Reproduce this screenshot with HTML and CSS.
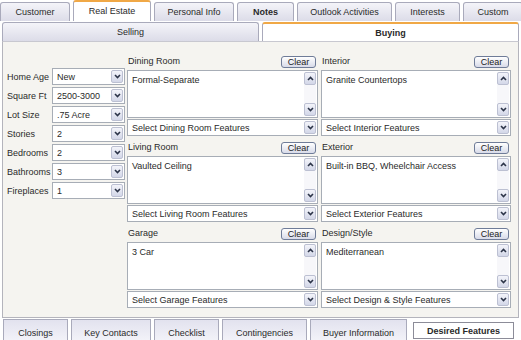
FILE: index.html
```html
<!DOCTYPE HTML>
<html>
<head>
<link rel="stylesheet" href="styles.css">
</head>
<body>
<div class="toptabs">
  <div class="tab w70">Customer</div>
  <div class="tab on w78">Real Estate</div>
  <div class="tab w80">Personal Info</div>
  <div class="tab bold w57">Notes</div>
  <div class="tab w95">Outlook Activities</div>
  <div class="tab w65">Interests</div>
  <div class="tab w60">Custom</div>
</div>

<div class="subtabs">
  <div class="subtab">Selling</div>
  <div class="subtab on bold">Buying</div>
</div>

<div class="panel">
  <div class="leftcol">
    <div class="row"><span class="lbl">Home Age</span><div class="sel small"><span>New</span><i class="arr"><svg width="7" height="5"><polyline points="1,1 3.5,3.5 6,1"/></svg></i></div></div>
    <div class="row"><span class="lbl">Square Ft</span><div class="sel small"><span>2500-3000</span><i class="arr"><svg width="7" height="5"><polyline points="1,1 3.5,3.5 6,1"/></svg></i></div></div>
    <div class="row"><span class="lbl">Lot Size</span><div class="sel small"><span>.75 Acre</span><i class="arr"><svg width="7" height="5"><polyline points="1,1 3.5,3.5 6,1"/></svg></i></div></div>
    <div class="row"><span class="lbl">Stories</span><div class="sel small"><span>2</span><i class="arr"><svg width="7" height="5"><polyline points="1,1 3.5,3.5 6,1"/></svg></i></div></div>
    <div class="row"><span class="lbl">Bedrooms</span><div class="sel small"><span>2</span><i class="arr"><svg width="7" height="5"><polyline points="1,1 3.5,3.5 6,1"/></svg></i></div></div>
    <div class="row"><span class="lbl">Bathrooms</span><div class="sel small"><span>3</span><i class="arr"><svg width="7" height="5"><polyline points="1,1 3.5,3.5 6,1"/></svg></i></div></div>
    <div class="row"><span class="lbl">Fireplaces</span><div class="sel small"><span>1</span><i class="arr"><svg width="7" height="5"><polyline points="1,1 3.5,3.5 6,1"/></svg></i></div></div>
  </div>

  <div class="col">
    <div class="group">
      <div class="ghead"><span>Dining Room</span><button class="clear">Clear</button></div>
      <div class="box"><span class="val">Formal-Separate</span>
        <div class="scroll"><i class="arr"><svg width="7" height="5"><polyline points="1,4 3.5,1.5 6,4"/></svg></i><i class="arr"><svg width="7" height="5"><polyline points="1,1 3.5,3.5 6,1"/></svg></i></div>
      </div>
      <div class="sel"><span>Select Dining Room Features</span><i class="arr"><svg width="7" height="5"><polyline points="1,1 3.5,3.5 6,1"/></svg></i></div>
    </div>
    <div class="group">
      <div class="ghead"><span>Living Room</span><button class="clear">Clear</button></div>
      <div class="box"><span class="val">Vaulted Ceiling</span>
        <div class="scroll"><i class="arr"><svg width="7" height="5"><polyline points="1,4 3.5,1.5 6,4"/></svg></i><i class="arr"><svg width="7" height="5"><polyline points="1,1 3.5,3.5 6,1"/></svg></i></div>
      </div>
      <div class="sel"><span>Select Living Room Features</span><i class="arr"><svg width="7" height="5"><polyline points="1,1 3.5,3.5 6,1"/></svg></i></div>
    </div>
    <div class="group">
      <div class="ghead"><span>Garage</span><button class="clear">Clear</button></div>
      <div class="box"><span class="val">3 Car</span>
        <div class="scroll"><i class="arr"><svg width="7" height="5"><polyline points="1,4 3.5,1.5 6,4"/></svg></i><i class="arr"><svg width="7" height="5"><polyline points="1,1 3.5,3.5 6,1"/></svg></i></div>
      </div>
      <div class="sel"><span>Select Garage Features</span><i class="arr"><svg width="7" height="5"><polyline points="1,1 3.5,3.5 6,1"/></svg></i></div>
    </div>
  </div>

  <div class="col right">
    <div class="group">
      <div class="ghead"><span>Interior</span><button class="clear">Clear</button></div>
      <div class="box"><span class="val">Granite Countertops</span>
        <div class="scroll"><i class="arr"><svg width="7" height="5"><polyline points="1,4 3.5,1.5 6,4"/></svg></i><i class="arr"><svg width="7" height="5"><polyline points="1,1 3.5,3.5 6,1"/></svg></i></div>
      </div>
      <div class="sel"><span>Select Interior Features</span><i class="arr"><svg width="7" height="5"><polyline points="1,1 3.5,3.5 6,1"/></svg></i></div>
    </div>
    <div class="group">
      <div class="ghead"><span>Exterior</span><button class="clear">Clear</button></div>
      <div class="box"><span class="val">Built-in BBQ, Wheelchair Access</span>
        <div class="scroll"><i class="arr"><svg width="7" height="5"><polyline points="1,4 3.5,1.5 6,4"/></svg></i><i class="arr"><svg width="7" height="5"><polyline points="1,1 3.5,3.5 6,1"/></svg></i></div>
      </div>
      <div class="sel"><span>Select Exterior Features</span><i class="arr"><svg width="7" height="5"><polyline points="1,1 3.5,3.5 6,1"/></svg></i></div>
    </div>
    <div class="group">
      <div class="ghead"><span>Design/Style</span><button class="clear">Clear</button></div>
      <div class="box"><span class="val">Mediterranean</span>
        <div class="scroll"><i class="arr"><svg width="7" height="5"><polyline points="1,4 3.5,1.5 6,4"/></svg></i><i class="arr"><svg width="7" height="5"><polyline points="1,1 3.5,3.5 6,1"/></svg></i></div>
      </div>
      <div class="sel"><span>Select Design &amp; Style Features</span><i class="arr"><svg width="7" height="5"><polyline points="1,1 3.5,3.5 6,1"/></svg></i></div>
    </div>
  </div>
</div>

<div class="bottomtabs">
  <div class="btab w65">Closings</div>
  <div class="btab w80">Key Contacts</div>
  <div class="btab w65">Checklist</div>
  <div class="btab w85">Contingencies</div>
  <div class="btab w97">Buyer Information</div>
  <div class="btab on bold w101">Desired Features</div>
</div>
</body>
</html>
```

FILE: styles.css
```css
body {
  margin: 0;
  background: #fff;
  font-family: "Liberation Sans", Arial, sans-serif;
  font-size: 9px;
  color: #2a2a2a;
  overflow: hidden;
}
.bold { font-weight: bold; }

.w57 { width: 57px; }
.w60 { width: 60px; }
.w65 { width: 65px; }
.w70 { width: 70px; }
.w78 { width: 78px; }
.w80 { width: 80px; }
.w85 { width: 85px; }
.w95 { width: 95px; }
.w97 { width: 97px; }
.w101 { width: 101px; }

/* top tabs */
.toptabs {
  display: flex;
  align-items: flex-end;
  gap: 3px;
  height: 21px;
}
.tab {
  height: 19px;
  box-sizing: border-box;
  border: 1px solid #a9aabb;
  border-bottom: none;
  border-radius: 3px 3px 0 0;
  background: linear-gradient(#f4f4f9, #dcdce8);
  display: flex;
  align-items: center;
  justify-content: center;
  padding-bottom: 1px;
  flex-shrink: 0;
}
.tab.on {
  height: 21px;
  background: #fff;
  border-top: 2px solid #f0a846;
}

/* sub tabs */
.subtabs {
  display: flex;
  gap: 3px;
  margin: 1px 2px 0 2px;
  height: 19px;
}
.subtab {
  flex: 1;
  box-sizing: border-box;
  border: 1px solid #a9aabb;
  border-bottom: none;
  border-radius: 3px 3px 0 0;
  background: linear-gradient(#f4f4f9, #dcdce8);
  display: flex;
  align-items: center;
  justify-content: center;
}
.subtab.on {
  background: #fff;
  border-top: 2px solid #f0a846;
}

/* main panel */
.panel {
  margin: 0 2px;
  height: 277px;
  box-sizing: border-box;
  border: 1px solid #b4b4bc;
  border-top-color: #c8c8d0;
  background: #f5f4f0;
  display: flex;
  padding: 14px 0 0 4px;
}
.leftcol {
  width: 120px;
  padding-top: 12px;
  display: flex;
  flex-direction: column;
  gap: 2px;
}
.row {
  display: flex;
  align-items: center;
  height: 17px;
}
.lbl { width: 45px; }

.sel {
  height: 17px;
  box-sizing: border-box;
  border: 1px solid #a7adb6;
  background: #fff;
  display: flex;
  align-items: center;
  justify-content: space-between;
  padding-left: 4px;
}
.sel.small { width: 73px; }
.arr {
  width: 12px;
  height: 13px;
  box-sizing: border-box;
  margin-right: 1px;
  border: 1px solid #bcc0d2;
  border-radius: 2px;
  background: linear-gradient(#f3f4fa, #d3d7e8);
  display: flex;
  align-items: center;
  justify-content: center;
}
.arr svg polyline {
  fill: none;
  stroke: #2c3448;
  stroke-width: 1.6;
}

.col {
  width: 191px;
  display: flex;
  flex-direction: column;
  gap: 6px;
}
.col.right {
  width: 190px;
  margin-left: 3px;
}
.group {
  display: flex;
  flex-direction: column;
}
.ghead {
  height: 14px;
  display: flex;
  align-items: flex-start;
  justify-content: space-between;
  padding-left: 1px;
}
.clear {
  width: 35px;
  height: 12px;
  margin-right: 2px;
  padding: 0;
  font-family: inherit;
  font-size: 9px;
  line-height: 10px;
  color: #222;
  border: 1px solid #6f7c98;
  border-radius: 3px;
  background: linear-gradient(#ffffff, #d8dbe9);
}
.box {
  height: 48px;
  box-sizing: border-box;
  border: 1px solid #a7adb6;
  background: #fff;
  display: flex;
  justify-content: space-between;
  margin-bottom: 1px;
}
.val {
  padding: 4px 0 0 4px;
}
.scroll {
  width: 12px;
  margin: 1px 1px 1px 0;
  display: flex;
  flex-direction: column;
  justify-content: space-between;
  background: #f7f7fa;
}
.scroll .arr { margin: 0; }

/* bottom tabs */
.bottomtabs {
  display: flex;
  align-items: flex-start;
  gap: 3px;
  margin: 1px 0 0 3px;
  height: 21px;
}
.btab {
  height: 21px;
  box-sizing: border-box;
  border: 1px solid #a9aabb;
  border-bottom: none;
  background: linear-gradient(#e2e2ee, #f2f2f8);
  display: flex;
  align-items: center;
  justify-content: center;
  padding-top: 6px;
  flex-shrink: 0;
}
.btab.on {
  margin-top: 3px;
  margin-left: 3px;
  height: 17px;
  padding-top: 1px;
  background: #fff;
  border: 1px solid #8c8c98;
}
```
